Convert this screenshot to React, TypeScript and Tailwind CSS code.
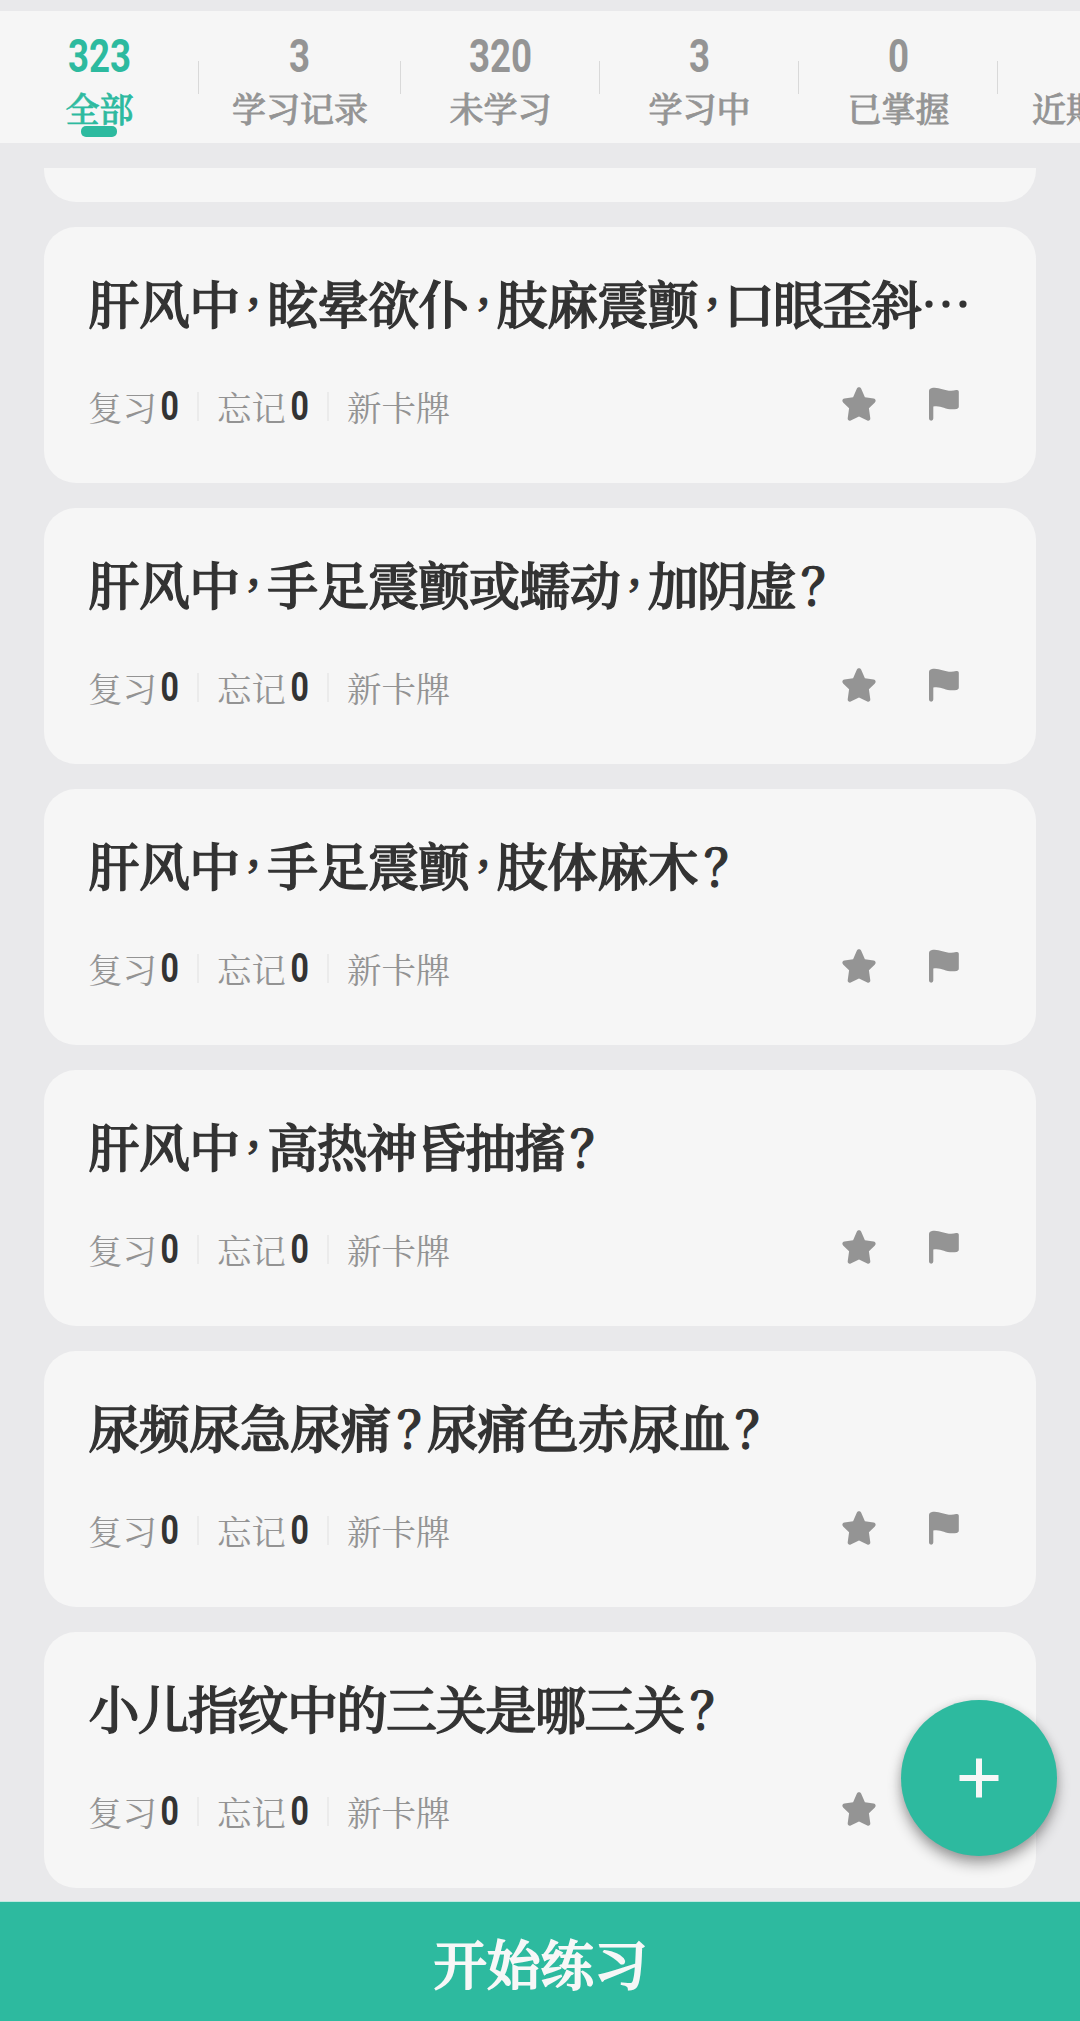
import { Fragment } from 'react';

interface Tab {
  count: string;
  label: string;
  width: string;
  active?: boolean;
}

const tabs: Tab[] = [
  { count: '323', label: '全部', width: 'w-[199px]', active: true },
  { count: '3', label: '学习记录', width: 'w-[202px]' },
  { count: '320', label: '未学习', width: 'w-[199px]' },
  { count: '3', label: '学习中', width: 'w-[199px]' },
  { count: '0', label: '已掌握', width: 'w-[199px]' },
];

const cards = [
  '肝风中，眩晕欲仆，肢麻震颤，口眼歪斜…',
  '肝风中，手足震颤或蠕动，加阴虚？',
  '肝风中，手足震颤，肢体麻木？',
  '肝风中，高热神昏抽搐？',
  '尿频尿急尿痛？尿痛色赤尿血？',
  '小儿指纹中的三关是哪三关？',
];

const tightRuns: Record<string, string> = {
  '口眼歪斜…': '-ml-[2px] tracking-[-1.8px]',
  '加阴虚': 'tracking-[-2px]',
  '高热神昏抽搐': 'tracking-[-1.5px]',
  '小儿指纹中的三关是哪三关': 'tracking-[-1.4px]',
};

// Condensed figures used for every counter
const Digits = ({ value, className }: { value: string; className: string }) => (
  <span className={`inline-flex justify-center font-['Roboto'] font-bold ${className}`}>
    <span className="inline-block scale-x-[0.78]">{value}</span>
  </span>
);

// Punctuation is set tighter than the full-width glyph box
const CardTitle = ({ text }: { text: string }) => (
  <h3 className="flex h-[60px] text-[51px] leading-[60px] font-medium tracking-[-0.6px] whitespace-nowrap text-[#333333] [-webkit-text-stroke:1.4px_#333333]">
    {text.split(/([，？])/).map((part, i) => {
      if (part === '，') {
        return (
          <span key={i} className="flex w-[27.600px] justify-center pt-[2px] font-['Noto_Serif_CJK_TC','Noto_Sans_CJK_TC',serif]" lang="zh-TW">
            <span className="inline-block scale-[0.88]">，</span>
          </span>
        );
      }
      if (part === '？') {
        return (
          <span key={i} className="flex w-[36px] justify-center font-['Noto_Serif_CJK_TC','Noto_Sans_CJK_TC',serif] font-semibold" lang="zh-TW">
            <span className="inline-block scale-x-[0.88] scale-y-[0.98]">？</span>
          </span>
        );
      }
      return <Fragment key={i}>{part && <span className={tightRuns[part]}>{part}</span>}</Fragment>;
    })}
  </h3>
);

const StarIcon = () => (
  <svg className="h-[34px] w-[34px]" viewBox="0 0 34 34" fill="#949494">
    <path d="M14.9 1.600c.8-1.800 3.400-1.800 4.200 0l3.800 8.700 8.700 1.200c2 .3 2.700 2.500 1.300 3.900l-6 5.800 1.400 10c.2 1.900-1.500 3-3 2.200L17 29.500l-8.300 3.900c-1.500.8-3.200-.3-3-2.200l1.400-10-6-5.800c-1.400-1.400-.7-3.600 1.300-3.900l8.700-1.200z" />
  </svg>
);

const FlagIcon = () => (
  <svg className="h-[34px] w-[30px]" viewBox="0 0 30 34" fill="#949494">
    <path d="M0 4.200C0 2.600.8 1.700 2.200 1.200 10-1.200 16.500 5.800 27.200 3.100c1.600-.4 2.600.3 2.600 1.800v14.600c0 1.400-.7 2.100-2 2.400-10.700 2.200-15.700-4.400-23.500-2.300v11.900a2.150 2.150 0 0 1-4.300 0z" />
  </svg>
);

const Divider = () => <span className="mr-[18px] ml-[18px] h-[29px] w-[2px] bg-[#ebebeb]" />;

const Card = ({ title }: { title: string }) => (
  <article className="flex h-[256px] shrink-0 flex-col rounded-[32px] bg-[#f6f6f6] pr-[77px] pl-[44px]">
    <div className="mt-[45px] pl-[0.5px]">
      <CardTitle text={title} />
    </div>
    <div className="mt-[52px] flex h-[44px] items-center text-[34.400px] leading-[44px] whitespace-nowrap text-[#939393]">
      <span className="w-[68px]">复习</span>
      <Digits value="0" className="ml-[5px] w-[18px] text-[41px] text-[#333333]" />
      <Divider />
      <span className="w-[68px]">忘记</span>
      <Digits value="0" className="ml-[6px] w-[18px] text-[41px] text-[#333333]" />
      <Divider />
      <span>新卡牌</span>
      <div className="-mt-[5px] ml-auto flex gap-[53px]">
        <StarIcon />
        <FlagIcon />
      </div>
    </div>
  </article>
);

const App = () => {
  return (
    <div
      lang="zh-CN"
      className="relative flex h-[2021px] w-[1080px] flex-col overflow-hidden bg-[#e9e9eb] pt-[11px] font-['Noto_Serif_CJK_SC','Noto_Sans_CJK_SC',serif]"
    >
      <nav className="flex h-[132px] shrink-0 overflow-hidden bg-[#f6f6f6]">
        {tabs.map((tab) => (
          <div
            key={tab.label}
            className={`relative flex shrink-0 justify-center pt-[20px] ${tab.width} ${tab.active ? 'text-[#2dba9f]' : 'text-[#949494]'}`}
          >
            <div className="flex flex-col items-center">
              <Digits value={tab.count} className="-ml-px h-[50px] text-[47px] leading-[50px]" />
              <span className="mt-[2px] h-[50px] text-[34px] leading-[50px] font-medium whitespace-nowrap [-webkit-text-stroke:0.8px_currentColor]">
                {tab.label}
              </span>
            </div>
            {tab.active && <span className="absolute bottom-[6px] left-[81px] h-[11px] w-[36px] rounded-[5px] bg-[#2dba9f]" />}
            <span className="absolute top-[50px] right-0 h-[33px] w-px bg-[#d9d9d9]" />
          </div>
        ))}
        <div className="shrink-0 pt-[72px] pl-[34px] text-[#949494]">
          <span className="block h-[50px] text-[34px] leading-[50px] font-medium whitespace-nowrap [-webkit-text-stroke:0.8px_currentColor]">近期</span>
        </div>
      </nav>

      <main className="mt-[25px] flex min-h-0 flex-1 flex-col gap-[25px] overflow-hidden px-[44px]">
        <div className="h-[34px] shrink-0 rounded-b-[32px] bg-[#f6f6f6]" />
        {cards.map((title) => (
          <Card key={title} title={title} />
        ))}
      </main>

      <button className="h-[120px] shrink-0 border-t border-[#bfe9e0] bg-[#2dba9f] pt-px pl-px text-[53.500px] leading-[118px] font-medium text-[#f7f7f7] [-webkit-text-stroke:1.8px_currentColor]">
        开始练习
      </button>

      <button className="absolute top-[1700px] left-[901px] flex h-[156px] w-[156px] items-center justify-center rounded-full bg-[#2dba9f] shadow-[0_8px_14px_rgba(0,0,0,0.32),0_2px_10px_rgba(0,0,0,0.12)]">
        <svg className="h-[40px] w-[40px]" viewBox="0 0 40 40" stroke="#f7f7f7" strokeWidth="6">
          <path d="M20 .5v39M.5 20h39" />
        </svg>
      </button>
    </div>
  );
};

export default App;
